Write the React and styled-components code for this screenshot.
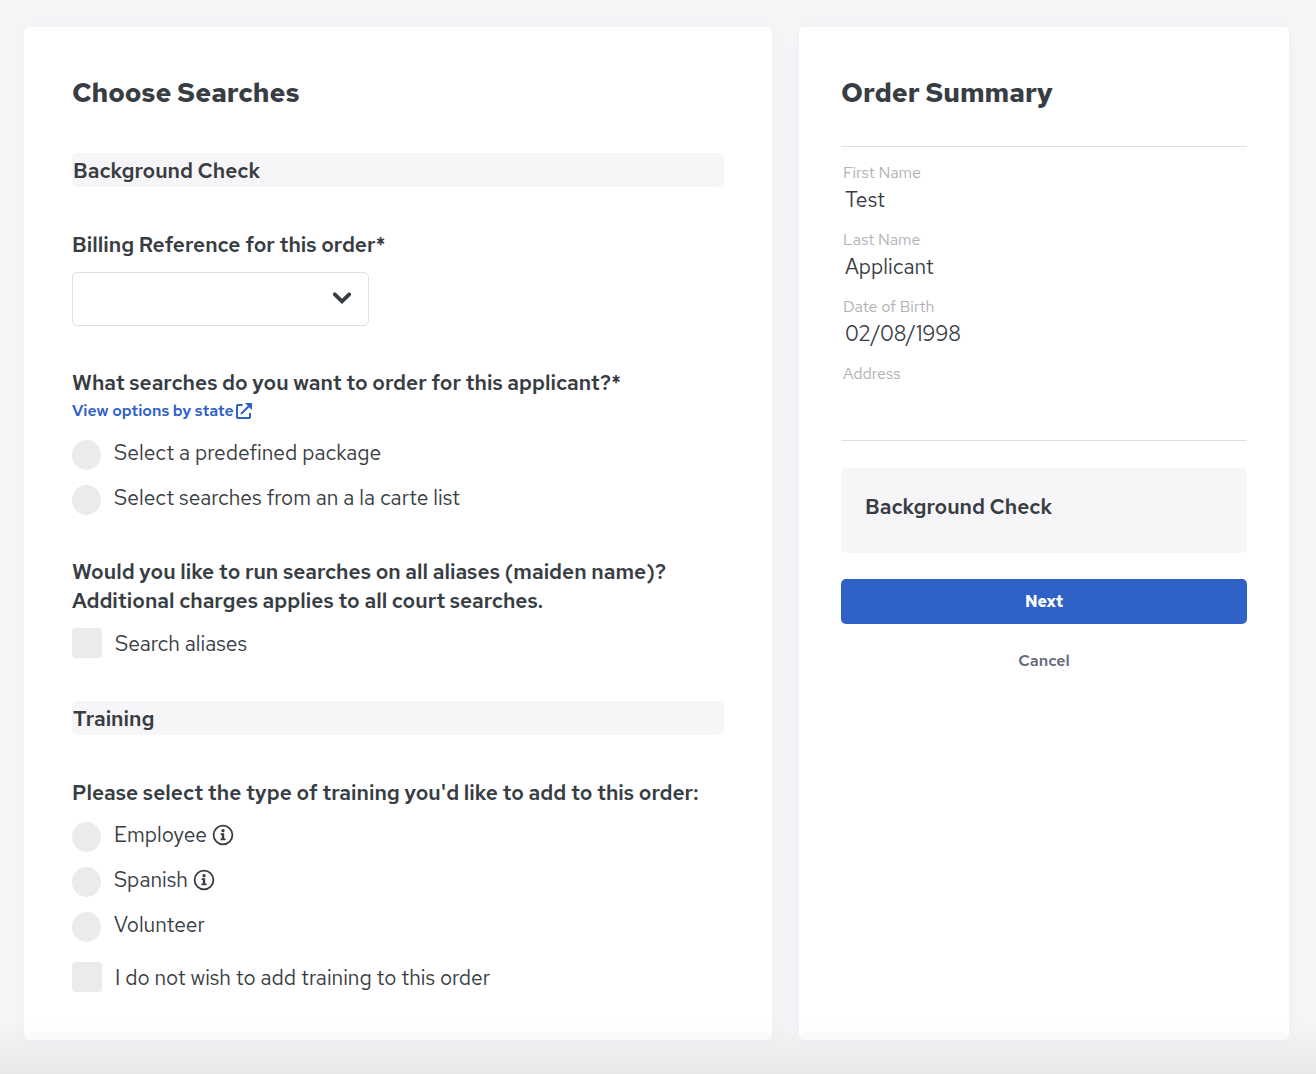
import React, { useState } from "react";
import styled, { createGlobalStyle } from "styled-components";

const applicant = [
  { label: "First Name", value: "Test" },
  { label: "Last Name", value: "Applicant" },
  { label: "Date of Birth", value: "02/08/1998" },
  { label: "Address", value: "" },
];

const searchTypes = [
  { id: "package", label: "Select a predefined package" },
  { id: "carte", label: "Select searches from an a la carte list" },
];

const trainings = [
  { id: "employee", label: "Employee", info: true },
  { id: "spanish", label: "Spanish", info: true },
  { id: "volunteer", label: "Volunteer" },
];

const ChevronIcon = () => (
  <svg width="20" height="14" viewBox="0 0 20 14" fill="none" aria-hidden="true">
    <path
      d="M2.8 3.3 10 10.3 17.2 3.3"
      stroke="currentColor"
      strokeWidth="3.8"
      strokeLinecap="round"
    />
  </svg>
);

const ExternalIcon = () => (
  <svg width="16" height="16" viewBox="0 0 16 16" fill="none" aria-hidden="true">
    <path
      d="M6.6 2H1.8a.8.8 0 0 0-.8.8v11.4c0 .4.4.8.8.8h11.4c.4 0 .8-.4.8-.8V10M5 11 14.2 1.8"
      stroke="currentColor"
      strokeWidth="2"
    />
    <path d="M9 0h7v7l-2.3-2.3-2.4-2.4z" fill="currentColor" />
  </svg>
);

const InfoIcon = () => (
  <svg width="22" height="22" viewBox="0 0 22 22" fill="none" aria-hidden="true">
    <circle cx="11" cy="11" r="9.4" stroke="currentColor" strokeWidth="1.8" />
    <circle cx="11" cy="6.7" r="1.6" fill="currentColor" />
    <path
      d="M8.6 9.3h3.6v5.2h1.4v1.7H8.5v-1.7h1.3V11H8.6z"
      fill="currentColor"
    />
  </svg>
);

function App() {
  const [searchType, setSearchType] = useState("");
  const [training, setTraining] = useState("");

  return (
    <>
      <GlobalStyle />
      <Page>
        <Card as="form" $side={48}>
          <Title>Choose Searches</Title>
          <SectionBar>Background Check</SectionBar>

          <Group>
            <Question as="label" htmlFor="billing">
              Billing Reference for this order*
            </Question>
            <SelectBox>
              <Select id="billing" defaultValue="">
                <option value="" />
              </Select>
              <ChevronIcon />
            </SelectBox>
          </Group>

          <Group role="radiogroup" aria-labelledby="searches">
            <Question id="searches">
              What searches do you want to order for this applicant?*
            </Question>
            <StateLink href="#options">
              View options by state
              <ExternalIcon />
            </StateLink>
            <Options>
              {searchTypes.map((item) => (
                <Option key={item.id}>
                  <Radio
                    name="searchType"
                    checked={searchType === item.id}
                    onChange={() => setSearchType(item.id)}
                  />
                  <RadioText>{item.label}</RadioText>
                </Option>
              ))}
            </Options>
          </Group>

          <Group>
            <Question>
              Would you like to run searches on all aliases (maiden name)?
              <br />
              Additional charges applies to all court searches.
            </Question>
            <CheckOption $top={13}>
              <Checkbox name="aliases" />
              <OptionText>Search aliases</OptionText>
            </CheckOption>
          </Group>

          <SectionBar>Training</SectionBar>

          <Group role="radiogroup" aria-labelledby="training">
            <Question id="training">
              Please select the type of training you'd like to add to this order:
            </Question>
            <Options>
              {trainings.map((item) => (
                <Option key={item.id}>
                  <Radio
                    name="training"
                    checked={training === item.id}
                    onChange={() => setTraining(item.id)}
                  />
                  <RadioText>
                    {item.label}
                    {item.info && <InfoIcon />}
                  </RadioText>
                </Option>
              ))}
            </Options>
            <CheckOption $top={20}>
              <Checkbox name="noTraining" />
              <OptionText>I do not wish to add training to this order</OptionText>
            </CheckOption>
          </Group>
        </Card>

        <Card as="aside" $side={42}>
          <Title>Order Summary</Title>
          <Details>
            {applicant.map((item) => (
              <Detail key={item.label}>
                <DetailLabel>{item.label}</DetailLabel>
                <DetailValue>{item.value}</DetailValue>
              </Detail>
            ))}
          </Details>
          <SummaryBox>Background Check</SummaryBox>
          <NextButton type="button">Next</NextButton>
          <CancelButton type="button">Cancel</CancelButton>
        </Card>
      </Page>
      <BottomFade />
    </>
  );
}

export default App;

const GlobalStyle = createGlobalStyle`
  * {
    box-sizing: border-box;
  }
  body {
    margin: 0;
    background: #f6f6f9;
    color: #373d43;
    font-family: "Red Hat Text", Inter, "Liberation Sans", sans-serif;
    font-size: 21px;
    -webkit-font-smoothing: antialiased;
  }
`;

const Page = styled.main`
  display: grid;
  grid-template-columns: minmax(0, 748fr) minmax(0, 490fr);
  gap: 27px;
  padding: 27px 27px 34px 24px;

  @media screen and (max-width: 900px) {
    grid-template-columns: 1fr;
  }
`;

const Card = styled.section`
  display: flex;
  flex-direction: column;
  padding: 48px ${({ $side }) => $side}px;
  background: #fff;
  border-radius: 5px;
  box-shadow: 0 0 24px rgba(40, 40, 90, 0.03);
`;

const Title = styled.h1`
  margin: 0;
  font-size: 27px;
  line-height: 35px;
  font-weight: 700;
`;

const SectionBar = styled.h2`
  margin: 43px 0 1px;
  padding: 2px 1px 0;
  background: #f6f6f9;
  border-radius: 5px;
  font-size: 21px;
  line-height: 32px;
  font-weight: 600;
`;

const Group = styled.div`
  display: flex;
  flex-direction: column;
  align-items: flex-start;
  margin-top: 42px;
`;

const Question = styled.div`
  line-height: 29px;
  font-weight: 600;
`;

const SelectBox = styled.div`
  position: relative;
  width: 297px;
  max-width: 100%;
  margin-top: 13px;
  svg {
    position: absolute;
    right: 17px;
    top: 19px;
    pointer-events: none;
  }
`;

const Select = styled.select`
  display: block;
  width: 100%;
  height: 54px;
  padding: 0 48px 0 16px;
  appearance: none;
  background: #fff;
  border: 1px solid #dfdfdf;
  border-radius: 5px;
  color: inherit;
  font: inherit;
`;

const StateLink = styled.a`
  display: flex;
  align-items: center;
  gap: 2px;
  color: #2f61c6;
  font-size: 16px;
  line-height: 28px;
  font-weight: 600;
  text-decoration: none;
`;

const Options = styled.div`
  display: flex;
  flex-direction: column;
  gap: 15px;
  margin-top: 15px;
`;

const Option = styled.label`
  display: flex;
  align-items: center;
  gap: 13px;
  cursor: pointer;
`;

const CheckOption = styled(Option)`
  margin-top: ${({ $top }) => $top}px;
`;

const Radio = styled.input.attrs({ type: "radio" })`
  flex: none;
  width: 29px;
  height: 30px;
  margin: 0;
  appearance: none;
  background: #ebebed;
  border-radius: 50%;
  &:checked {
    border: 8px solid #2f61c6;
  }
`;

const Checkbox = styled.input.attrs({ type: "checkbox" })`
  flex: none;
  width: 30px;
  height: 30px;
  margin: 0;
  appearance: none;
  background: #ebebed;
  border-radius: 4px;
  &:checked {
    background: #2f61c6;
  }
`;

const OptionText = styled.span`
  display: flex;
  align-items: center;
  gap: 5px;
  padding-top: 2px;
  line-height: 26px;
`;

const RadioText = styled(OptionText)`
  padding: 0 0 4px;
`;

const Details = styled.dl`
  display: flex;
  flex-direction: column;
  gap: 12px;
  margin: 36px 0 0;
  padding: 12px 2px 25px;
  border-top: 1px solid #dfdfdf;
  border-bottom: 1px solid #dfdfdf;
`;

const Detail = styled.div`
  display: flex;
  flex-direction: column;
`;

const DetailLabel = styled.dt`
  color: #b0b1b4;
  font-size: 16px;
  line-height: 27px;
`;

const DetailValue = styled.dd`
  min-height: 28px;
  margin: 0;
  padding-left: 2px;
  line-height: 28px;
`;

const SummaryBox = styled.div`
  margin-top: 27px;
  padding: 24px 24px 32px;
  background: #f6f6f9;
  border-radius: 5px;
  line-height: 29px;
  font-weight: 600;
`;

const Button = styled.button`
  height: 45px;
  border: 0;
  border-radius: 5px;
  font-family: inherit;
  font-size: 16px;
  cursor: pointer;
`;

const NextButton = styled(Button)`
  margin-top: 26px;
  background: #2f61c6;
  color: #fff;
  font-weight: 700;
`;

const CancelButton = styled(Button)`
  margin-top: 14px;
  background: transparent;
  color: #656b7c;
  font-weight: 600;
`;

const BottomFade = styled.div`
  position: fixed;
  left: 0;
  right: 0;
  bottom: 0;
  height: 54px;
  background: linear-gradient(rgba(0, 0, 0, 0), rgba(0, 0, 0, 0.055));
  pointer-events: none;
`;
